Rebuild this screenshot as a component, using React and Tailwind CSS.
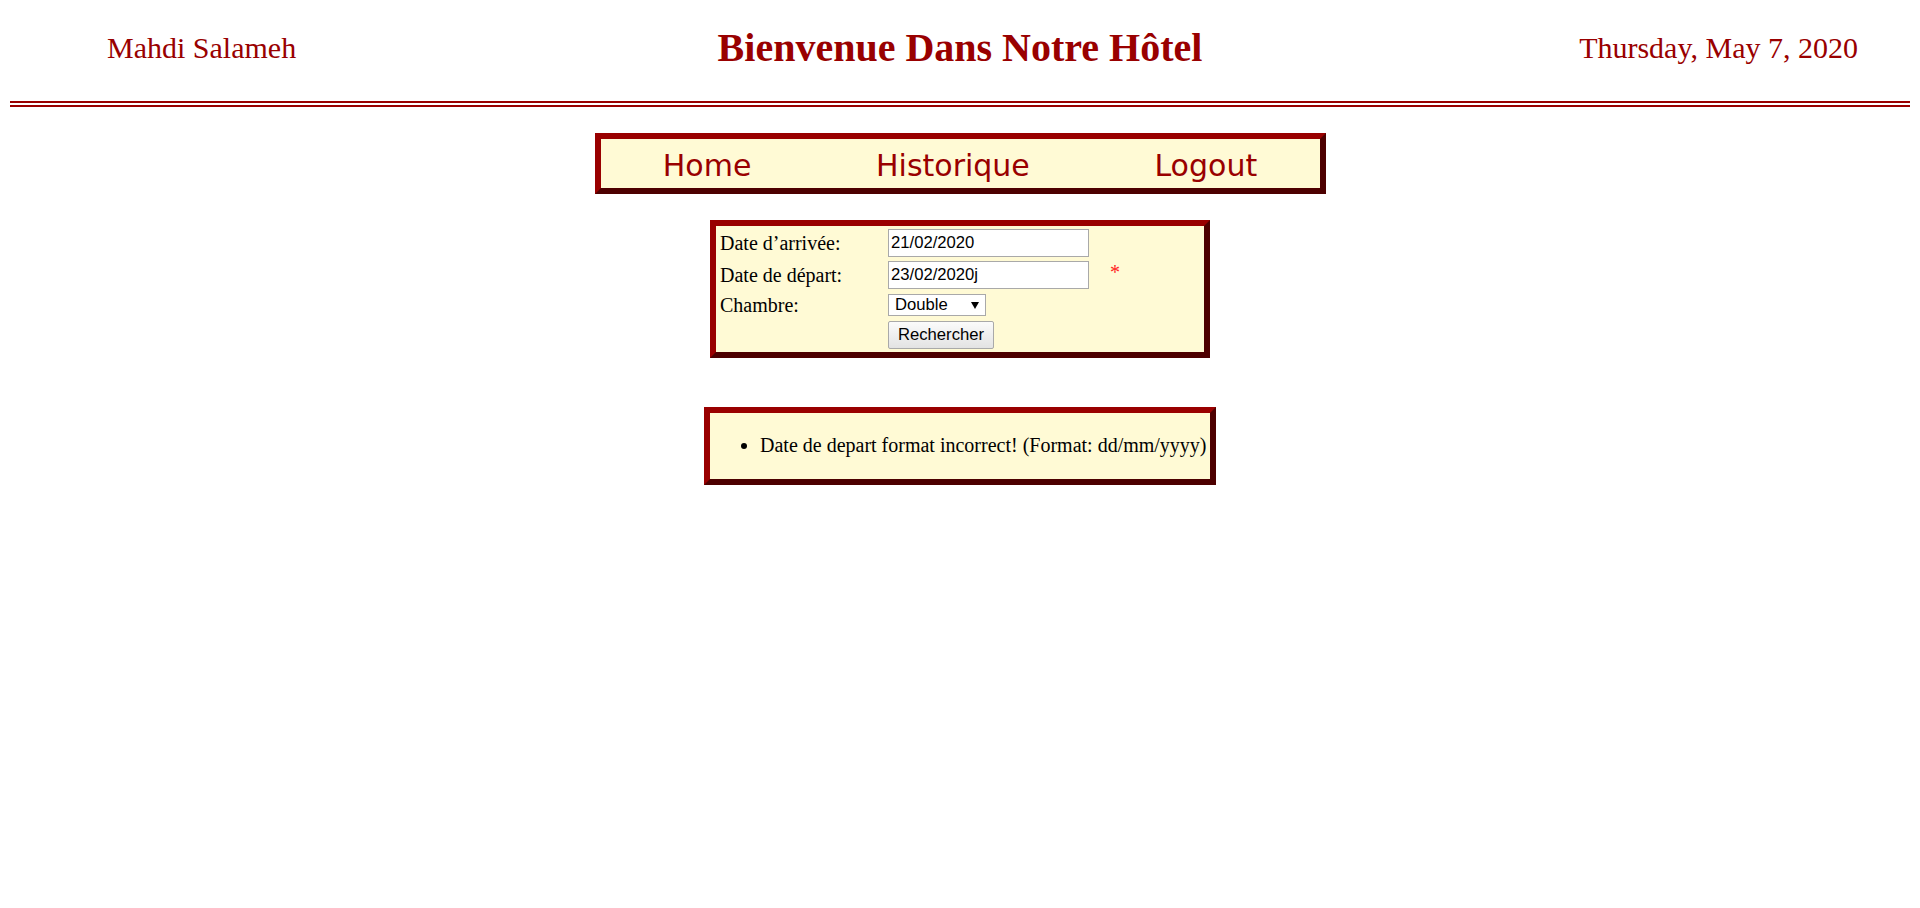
export default function App() {
  const serif = { fontFamily: '"Liberation Serif", "Times New Roman", serif' };
  const sans = { fontFamily: '"Liberation Sans", Arial, sans-serif' };
  return (
    <div className="min-h-[908px] bg-white p-[10px]" style={serif}>
      {/* Header */}
      <header className="border-b-[6px] border-double border-[#990000] pb-[16px]">
        <div className="grid h-[75px] grid-cols-3 items-center text-[#990000]">
          <div className="pl-[97px] text-[30px] leading-none whitespace-nowrap">Mahdi Salameh</div>
          <div className="text-center text-[40px] font-bold leading-none whitespace-nowrap">Bienvenue Dans Notre Hôtel</div>
          <div className="pr-[52px] text-right text-[30px] leading-none whitespace-nowrap">Thursday, May 7, 2020</div>
        </div>
      </header>

      {/* Nav */}
      <nav
        className="mx-auto mt-[26px] box-border flex h-[61px] w-[731px] items-center justify-around border-[6px] border-t-[#990000] border-l-[#990000] border-r-[#4d0000] border-b-[#4d0000] bg-[#fffad5] pt-[4px] text-[30px] text-[#990000]"
        style={{ fontFamily: '"DejaVu Sans", Verdana, sans-serif' }}
      >
        <a className="leading-none">Home</a>
        <a className="leading-none">Historique</a>
        <a className="leading-none">Logout</a>
      </nav>

      {/* Form */}
      <div className="mx-auto mt-[26px] box-border h-[138px] w-[500px] border-[6px] border-t-[#990000] border-l-[#990000] border-r-[#4d0000] border-b-[#4d0000] bg-[#fffad5] pl-[4px] pt-[3px] text-[20px] text-black">
        <div className="flex h-[28px] items-center">
          <div className="w-[168px] leading-none">Date d’arrivée:</div>
          <input
            readOnly
            value="21/02/2020"
            className="box-border block h-[28px] w-[201px] border border-[#a9a9a9] bg-white px-[2px] text-[16.67px] text-black outline-none"
            style={sans}
          />
        </div>
        <div className="mt-[4px] flex h-[28px] items-center">
          <div className="w-[168px] leading-none">Date de départ:</div>
          <input
            readOnly
            value="23/02/2020j"
            className="box-border block h-[28px] w-[201px] border border-[#a9a9a9] bg-white px-[2px] text-[16.67px] text-black outline-none"
            style={sans}
          />
          <span className="ml-[21px] -mt-[6px] text-[20px] leading-none text-[#ff2020]">*</span>
        </div>
        <div className="mt-[5px] flex h-[22px] items-center">
          <div className="w-[168px] leading-none">Chambre:</div>
          <div className="relative h-[22px] w-[98px]">
            <select
              className="box-border block h-[22px] w-[98px] appearance-none rounded-none border border-[#a9a9a9] bg-white py-0 pl-[6px] text-[16.67px] leading-none text-black outline-none"
              style={sans}
              defaultValue="Double"
            >
              <option>Double</option>
              <option>Simple</option>
            </select>
            <svg className="pointer-events-none absolute left-[83px] top-[8px]" width="8" height="7" viewBox="0 0 8 7">
              <polygon points="0,0 8,0 4,7" fill="#000" />
            </svg>
          </div>
        </div>
        <div className="mt-[5px] flex h-[28px] items-center">
          <div className="w-[168px]"></div>
          <button
            className="box-border block h-[28px] w-[106px] rounded-[2px] border border-[#a9a9a9] bg-gradient-to-b from-[#fbfbfb] to-[#e3e3e3] text-center text-[16.67px] leading-none text-black"
            style={sans}
          >
            Rechercher
          </button>
        </div>
      </div>

      {/* Errors */}
      <div className="mx-auto mt-[49px] box-border flex h-[78px] w-[512px] items-center border-[6px] border-t-[#990000] border-l-[#990000] border-r-[#4d0000] border-b-[#4d0000] bg-[#fffad5] pb-[2px] text-[20px] text-black">
        <ul className="list-disc pl-[50px] whitespace-nowrap">
          <li className="leading-[23px]">Date de depart format incorrect! (Format: dd/mm/yyyy)</li>
        </ul>
      </div>
    </div>
  );
}
